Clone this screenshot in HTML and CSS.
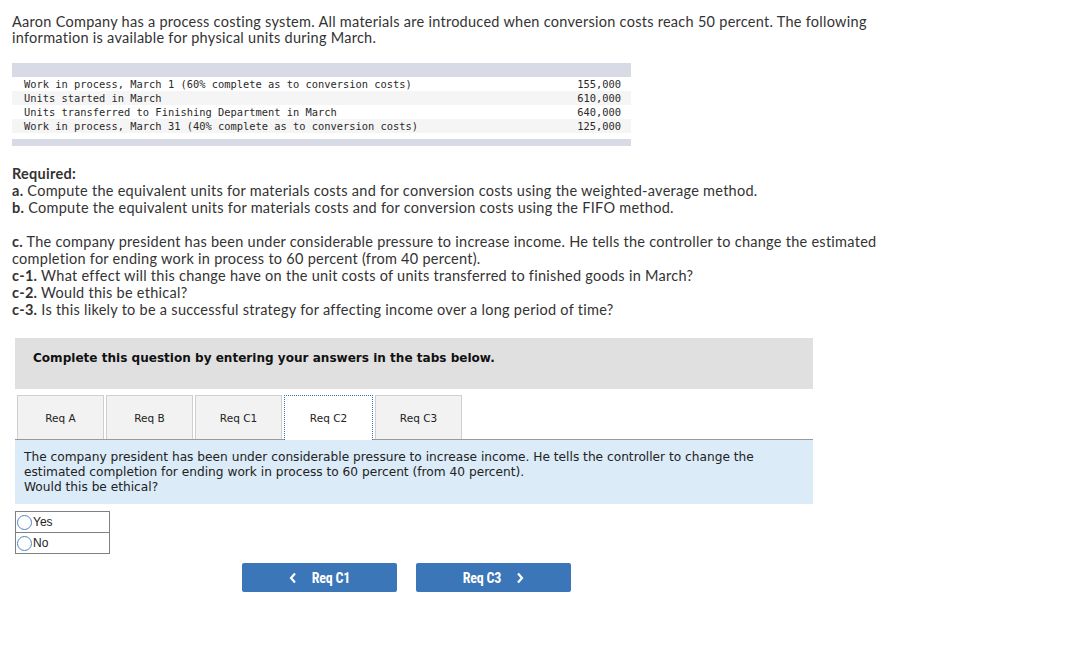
FILE: index.html
```html
<!DOCTYPE html>
<html>
<head>
<meta charset="utf-8">
<link rel="stylesheet" href="styles.css">
</head>
<body>
<div class="page">
  <p class="intro">Aaron Company has a process costing system. All materials are introduced when conversion costs reach 50 percent. The following information is available for physical units during March.</p>

  <div class="data">
    <div class="band"></div>
    <div class="row"><span>Work in process, March 1 (60% complete as to conversion costs)</span><span>155,000</span></div>
    <div class="row alt"><span>Units started in March</span><span>610,000</span></div>
    <div class="row"><span>Units transferred to Finishing Department in March</span><span>640,000</span></div>
    <div class="row alt"><span>Work in process, March 31 (40% complete as to conversion costs)</span><span>125,000</span></div>
    <div class="gap"></div>
    <div class="band thin"></div>
  </div>

  <div class="required">
    <p class="line"><b>Required:</b></p>
    <p class="line"><b>a.</b> Compute the equivalent units for materials costs and for conversion costs using the weighted-average method.</p>
    <p class="line"><b>b.</b> Compute the equivalent units for materials costs and for conversion costs using the FIFO method.</p>
    <p class="line blank"></p>
    <p class="line"><b>c.</b> The company president has been under considerable pressure to increase income. He tells the controller to change the estimated completion for ending work in process to 60 percent (from 40 percent).</p>
    <p class="line"><b>c-1.</b> What effect will this change have on the unit costs of units transferred to finished goods in March?</p>
    <p class="line"><b>c-2.</b> Would this be ethical?</p>
    <p class="line"><b>c-3.</b> Is this likely to be a successful strategy for affecting income over a long period of time?</p>
  </div>

  <div class="qbox">Complete this question by entering your answers in the tabs below.</div>

  <div class="tabs">
    <div class="tab">Req A</div>
    <div class="tab">Req B</div>
    <div class="tab">Req C1</div>
    <div class="tab active">Req C2</div>
    <div class="tab">Req C3</div>
  </div>

  <div class="content">The company president has been under considerable pressure to increase income. He tells the controller to change the estimated completion for ending work in process to 60 percent (from 40 percent).<br>Would this be ethical?</div>

  <table class="radios">
    <tr><td><span class="radio"></span>Yes</td></tr>
    <tr><td><span class="radio"></span>No</td></tr>
  </table>

  <div class="nav">
    <div class="btn"><svg class="chev" width="8" height="12" viewBox="0 0 8 12"><polyline points="6,1.5 2,6 6,10.5" fill="none" stroke="#fff" stroke-width="2.2"/></svg>Req C1</div>
    <div class="btn">Req C3<svg class="chev r" width="8" height="12" viewBox="0 0 8 12"><polyline points="2,1.5 6,6 2,10.5" fill="none" stroke="#fff" stroke-width="2.2"/></svg></div>
  </div>
</div>
</body>
</html>
```

FILE: styles.css
```css
html, body {
  margin: 0;
  padding: 0;
  background: #fff;
}
.page {
  padding: 14px 0 0 12px;
  color: #333;
  font-family: Lato, "Open Sans", sans-serif;
  font-size: 14.5px;
  letter-spacing: 0.27px;
}
.intro {
  margin: 0;
  width: 875px;
  line-height: 16px;
}
.data {
  margin-top: 17px;
  width: 619px;
  font-family: "DejaVu Sans Mono", "Liberation Mono", monospace;
  font-size: 10.4px;
  letter-spacing: 0;
  color: #2a2a2a;
}
.band {
  height: 14px;
  background: #d8dbe6;
}
.band.thin {
  height: 7px;
}
.row {
  height: 14px;
  line-height: 14px;
  display: flex;
  justify-content: space-between;
  padding: 0 10px 0 12px;
}
.row.alt {
  background: #f5f5f5;
}
.gap {
  height: 6px;
}
.required {
  margin-top: 19px;
  width: 885px;
}
.line {
  margin: 0;
  line-height: 17px;
}
.line b {
  font-weight: 700;
}
.blank {
  height: 17px;
}
.qbox {
  margin: 20px 0 0 3px;
  width: 798px;
  height: 51px;
  box-sizing: border-box;
  padding: 12px 0 0 18px;
  background: #e0e0e0;
  font-family: "DejaVu Sans", Verdana, sans-serif;
  font-weight: 700;
  font-size: 12.05px;
  letter-spacing: 0;
  line-height: 16px;
  color: #111;
}
.tabs {
  margin: 6px 0 0 3px;
  width: 798px;
  display: flex;
  gap: 2px;
  padding-left: 2px;
  box-sizing: border-box;
  border-bottom: 1px solid #9a9a9a;
  height: 45px;
  letter-spacing: 0;
}
.tab {
  width: 87px;
  height: 44px;
  box-sizing: border-box;
  background: #f2f2f2;
  border: 1px solid #cfcfcf;
  border-bottom: none;
  display: flex;
  align-items: center;
  justify-content: center;
  font-family: "DejaVu Sans", Verdana, sans-serif;
  font-size: 10.5px;
  color: #222;
}
.tab.active {
  width: 89px;
  height: 45px;
  background: #fff;
  border: 1px dotted #3a6fb0;
  border-bottom: none;
  margin-bottom: -1px;
}
.content {
  margin-left: 3px;
  width: 798px;
  box-sizing: border-box;
  background: #dbebf8;
  padding: 10px 40px 9px 9px;
  font-family: "DejaVu Sans", Verdana, sans-serif;
  font-size: 12.2px;
  letter-spacing: 0;
  line-height: 15px;
  color: #222;
}
.radios {
  margin: 7px 0 0 3px;
  border-collapse: collapse;
  width: 95px;
  letter-spacing: 0;
}
.radios tr {
  display: block;
}
.radios td {
  border: 1px solid #808080;
  height: 20px;
  width: 93px;
  padding: 0;
  font-family: "Liberation Sans", Arial, sans-serif;
  font-size: 12px;
  color: #222;
  display: flex;
  align-items: center;
}
.radios tr + tr td {
  border-top: none;
}
.radio {
  display: inline-block;
  width: 13px;
  height: 13px;
  border: 1px solid #4f86c6;
  border-radius: 50%;
  margin: 0 1px 0 1px;
  background: #fff;
}
.nav {
  margin: 9px 0 0 230px;
  display: flex;
  gap: 19px;
  letter-spacing: 0;
}
.btn {
  width: 155px;
  height: 29px;
  background: #3b76b9;
  border-radius: 2px;
  color: #fff;
  display: flex;
  align-items: center;
  justify-content: center;
  font-family: "Liberation Sans Narrow", "Roboto Condensed", Roboto, sans-serif;
  font-weight: 700;
  font-size: 14px;
  letter-spacing: -0.2px;
}
.chev {
  margin-right: 15px;
}
.chev.r {
  margin-right: 0;
  margin-left: 15px;
}
```
